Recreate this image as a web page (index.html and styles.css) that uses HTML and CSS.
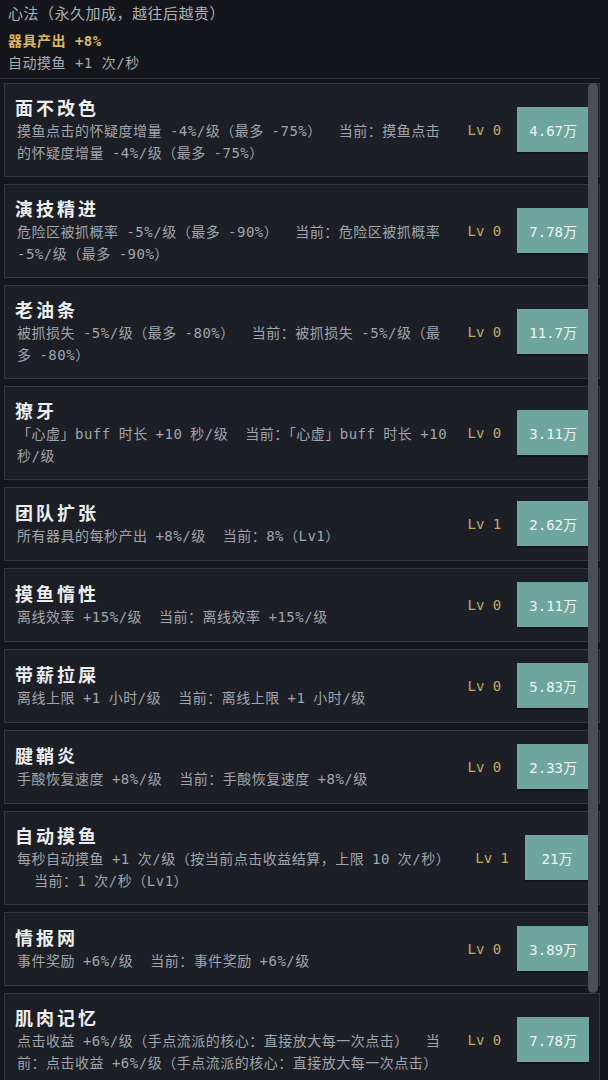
FILE: index.html
```html
<!DOCTYPE html>
<html lang="zh-CN">
<head>
  <meta charset="UTF-8" />
  <meta name="viewport" content="width=device-width, initial-scale=1.0"/>
  <title>心法</title>
  <link rel="stylesheet" href="styles.css">
</head>
<body>
  <header class="intro">
    <div class="intro-title">心法（永久加成，越往后越贵）</div>
    <div class="intro-bonus">器具产出 +8%</div>
    <div class="intro-line">自动摸鱼 +1 次/秒</div>
  </header>

  <section class="panel">
    <div class="list">
      <div class="card">
        <div class="info">
          <div class="name">面不改色</div>
          <div class="desc">摸鱼点击的怀疑度增量 -4%/级（最多 -75%）<span class="cur">当前：摸鱼点击的怀疑度增量 -4%/级（最多 -75%）</span></div>
        </div>
        <div class="side">
          <span class="lv">Lv 0</span>
          <button class="buy">4.67万</button>
        </div>
      </div>

      <div class="card">
        <div class="info">
          <div class="name">演技精进</div>
          <div class="desc">危险区被抓概率 -5%/级（最多 -90%）<span class="cur">当前：危险区被抓概率 -5%/级（最多 -90%）</span></div>
        </div>
        <div class="side">
          <span class="lv">Lv 0</span>
          <button class="buy">7.78万</button>
        </div>
      </div>

      <div class="card">
        <div class="info">
          <div class="name">老油条</div>
          <div class="desc">被抓损失 -5%/级（最多 -80%）<span class="cur">当前：被抓损失 -5%/级（最多 -80%）</span></div>
        </div>
        <div class="side">
          <span class="lv">Lv 0</span>
          <button class="buy">11.7万</button>
        </div>
      </div>

      <div class="card">
        <div class="info">
          <div class="name">獠牙</div>
          <div class="desc">「心虚」buff 时长 +10 秒/级<span class="cur">当前：「心虚」buff 时长 +10 秒/级</span></div>
        </div>
        <div class="side">
          <span class="lv">Lv 0</span>
          <button class="buy">3.11万</button>
        </div>
      </div>

      <div class="card">
        <div class="info">
          <div class="name">团队扩张</div>
          <div class="desc">所有器具的每秒产出 +8%/级<span class="cur">当前：8%（Lv1）</span></div>
        </div>
        <div class="side">
          <span class="lv">Lv 1</span>
          <button class="buy">2.62万</button>
        </div>
      </div>

      <div class="card">
        <div class="info">
          <div class="name">摸鱼惰性</div>
          <div class="desc">离线效率 +15%/级<span class="cur">当前：离线效率 +15%/级</span></div>
        </div>
        <div class="side">
          <span class="lv">Lv 0</span>
          <button class="buy">3.11万</button>
        </div>
      </div>

      <div class="card">
        <div class="info">
          <div class="name">带薪拉屎</div>
          <div class="desc">离线上限 +1 小时/级<span class="cur">当前：离线上限 +1 小时/级</span></div>
        </div>
        <div class="side">
          <span class="lv">Lv 0</span>
          <button class="buy">5.83万</button>
        </div>
      </div>

      <div class="card">
        <div class="info">
          <div class="name">腱鞘炎</div>
          <div class="desc">手酸恢复速度 +8%/级<span class="cur">当前：手酸恢复速度 +8%/级</span></div>
        </div>
        <div class="side">
          <span class="lv">Lv 0</span>
          <button class="buy">2.33万</button>
        </div>
      </div>

      <div class="card">
        <div class="info">
          <div class="name">自动摸鱼</div>
          <div class="desc">每秒自动摸鱼 +1 次/级（按当前点击收益结算，上限 10 次/秒）<span class="cur">当前：1 次/秒（Lv1）</span></div>
        </div>
        <div class="side">
          <span class="lv">Lv 1</span>
          <button class="buy">21万</button>
        </div>
      </div>

      <div class="card">
        <div class="info">
          <div class="name">情报网</div>
          <div class="desc">事件奖励 +6%/级<span class="cur">当前：事件奖励 +6%/级</span></div>
        </div>
        <div class="side">
          <span class="lv">Lv 0</span>
          <button class="buy">3.89万</button>
        </div>
      </div>

      <div class="card">
        <div class="info">
          <div class="name">肌肉记忆</div>
          <div class="desc">点击收益 +6%/级（手点流派的核心：直接放大每一次点击）<span class="cur">当前：点击收益 +6%/级（手点流派的核心：直接放大每一次点击）</span></div>
        </div>
        <div class="side">
          <span class="lv">Lv 0</span>
          <button class="buy">7.78万</button>
        </div>
      </div>
    </div>
    <div class="thumb"></div>
  </section>
</body>
</html>
```

FILE: styles.css
```css
:root {
  --bg: #14161b;
  --card: #1c1f26;
  --line: #343843;
  --text: #eceded;
  --muted: #a2a5ab;
  --gold: #c9a764;
  --teal: #6ea69d;
  --mono: "DejaVu Sans Mono", "Noto Sans CJK SC", monospace;
}

* {
  box-sizing: border-box;
}

html, body {
  height: 100%;
}

body {
  margin: 0;
  background-color: var(--bg);
  color: var(--muted);
  font-family: var(--mono);
  overflow: hidden;
}

.intro {
  padding: 4px 8px 4px;
}

.intro-title {
  font-size: 15px;
  line-height: 20px;
  letter-spacing: 0.5px;
  color: #aeb0b5;
  margin-bottom: 6px;
}

.intro-bonus,
.intro-line {
  font-size: 14px;
  line-height: 22px;
  letter-spacing: 0.5px;
}

.intro-bonus {
  color: #d9b56c;
  font-weight: 700;
}

.intro-line {
  color: #a9acb1;
}

.panel {
  position: relative;
  width: 600px;
  height: calc(100% - 78px);
  border-top: 1px solid #2b2f38;
  overflow: hidden;
}

.list {
  display: flex;
  flex-direction: column;
  gap: 7px;
  padding: 4px 0 0 4px;
}

.card {
  display: flex;
  align-items: center;
  gap: 14px;
  min-height: 74px;
  background-color: var(--card);
  border: 1px solid var(--line);
  padding: 11px 10px 12px 10px;
}

.info {
  flex: 1;
  min-width: 0;
}

.name {
  font-family: "Noto Sans CJK SC", sans-serif;
  font-size: 18px;
  font-weight: 700;
  line-height: 25px;
  letter-spacing: 3px;
  color: var(--text);
}

.desc {
  font-size: 14px;
  line-height: 22px;
  letter-spacing: 0.5px;
  word-spacing: -1px;
  color: var(--muted);
  padding-left: 2px;
}

.cur {
  margin-left: 17px;
}

.side {
  display: flex;
  align-items: center;
  gap: 16px;
}

.lv {
  font-size: 14px;
  color: var(--gold);
  white-space: nowrap;
}

.buy {
  height: 45px;
  min-width: 64px;
  padding: 0 12px;
  border: none;
  background-color: var(--teal);
  color: #eef4f2;
  font-family: var(--mono);
  font-size: 14px;
  box-shadow: 0 2px 0 rgba(0, 0, 0, 0.35);
  cursor: pointer;
}

.thumb {
  position: absolute;
  top: 4px;
  right: 2px;
  width: 10px;
  height: 910px;
  border-radius: 5px;
  background-color: #4a4e56;
}
```
